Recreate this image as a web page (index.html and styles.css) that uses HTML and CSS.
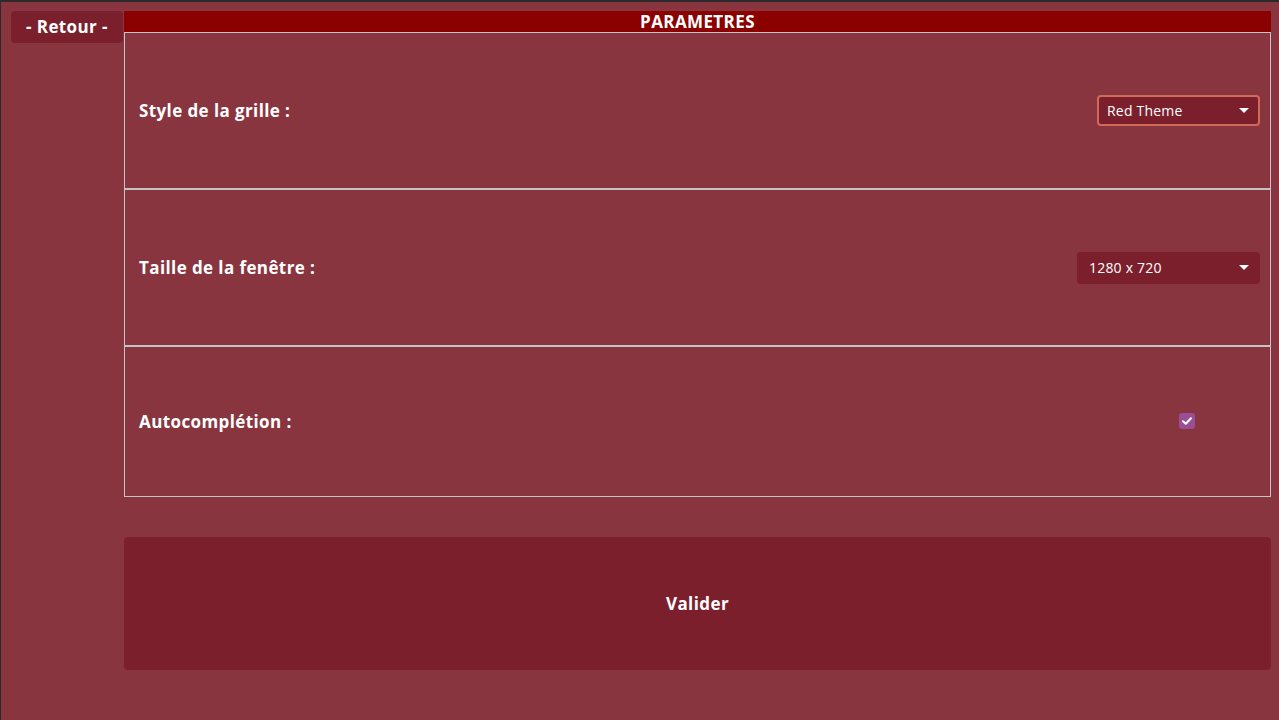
FILE: index.html
```html
<!DOCTYPE html>
<html lang="fr">
<head>
<meta charset="utf-8">
<title>Paramètres</title>
<link rel="stylesheet" href="styles.css">
</head>
<body>
<div class="app">
  <aside class="side">
    <button class="back">- Retour -</button>
  </aside>
  <main class="main">
    <div class="title">PARAMETRES</div>
    <div class="panel">
      <div class="row">
        <span class="label">Style de la grille :</span>
        <div class="select focused"><span>Red Theme</span><span class="caret"></span></div>
      </div>
      <div class="row mid">
        <span class="label">Taille de la fenêtre :</span>
        <div class="select wide"><span>1280 x 720</span><span class="caret"></span></div>
      </div>
      <div class="row short">
        <span class="label">Autocomplétion :</span>
        <span class="check"><svg width="14" height="14" viewBox="0 0 14 14"><path d="M3 7.2 L5.8 9.8 L11 4.2" fill="none" stroke="#fff" stroke-width="2" stroke-linecap="round" stroke-linejoin="round"/></svg></span>
      </div>
    </div>
    <button class="validate">Valider</button>
  </main>
</div>
</body>
</html>
```
FILE: styles.css
```css
html, body {
  margin: 0;
  padding: 0;
  height: 100%;
}
body {
  background: #88353f;
  border-top: 2px solid #2b2b2b;
  border-left: 1px solid #2b2b2b;
  box-sizing: border-box;
  font-family: "Open Sans", "Noto Sans", sans-serif;
  color: #fff;
  letter-spacing: 0.4px;
}
.app {
  display: flex;
  padding-top: 9px;
}
.side {
  width: 123px;
  flex: none;
}
.back {
  margin-left: 10px;
  width: 112px;
  height: 32px;
  border: none;
  border-radius: 4px;
  background: #7b1f2d;
  color: #fff;
  font-family: inherit;
  letter-spacing: 0.4px;
  font-weight: 700;
  font-size: 17px;
  padding: 0;
  line-height: 32px;
}
.main {
  width: 1147px;
  flex: none;
  display: flex;
  flex-direction: column;
}
.title {
  height: 21px;
  background: #8b0000;
  text-align: center;
  font-weight: 700;
  font-size: 17px;
  line-height: 21px;
}
.panel {
  display: flex;
  flex-direction: column;
}
.row {
  height: 157px;
  box-sizing: border-box;
  border: 1px solid #c4c4c4;
  display: flex;
  align-items: center;
  justify-content: space-between;
  padding: 0 10px 0 14px;
}
.row + .row {
  border-top: 2px solid #c4c4c4;
  margin-top: -1px;
}
.row.mid {
  height: 158px;
}
.row.short {
  height: 152px;
}
.label {
  font-weight: 700;
  font-size: 17px;
}
.select {
  height: 32px;
  box-sizing: border-box;
  width: 163px;
  border-radius: 4px;
  background: #7b1f2d;
  display: flex;
  align-items: center;
  justify-content: space-between;
  padding: 0 11px 0 10px;
  font-size: 14px;
  letter-spacing: 0.2px;
}
.select.focused {
  border: 2px solid #d06b57;
  padding: 0 9px 0 8px;
  height: 31px;
}
.select.wide {
  width: 183px;
  padding-left: 12px;
}
.caret {
  width: 0;
  height: 0;
  border-left: 5.5px solid transparent;
  border-right: 5.5px solid transparent;
  border-top: 5.5px solid #fff;
}
.check {
  width: 16px;
  height: 16px;
  border-radius: 3px;
  background: #9a4f95;
  display: flex;
  align-items: center;
  justify-content: center;
  margin-right: 65px;
  margin-bottom: 2px;
}
.validate {
  margin-top: 40px;
  height: 133px;
  border: none;
  border-radius: 4px;
  background: #7b1f2d;
  color: #fff;
  font-family: inherit;
  letter-spacing: 0.4px;
  font-weight: 700;
  font-size: 17px;
}
```
